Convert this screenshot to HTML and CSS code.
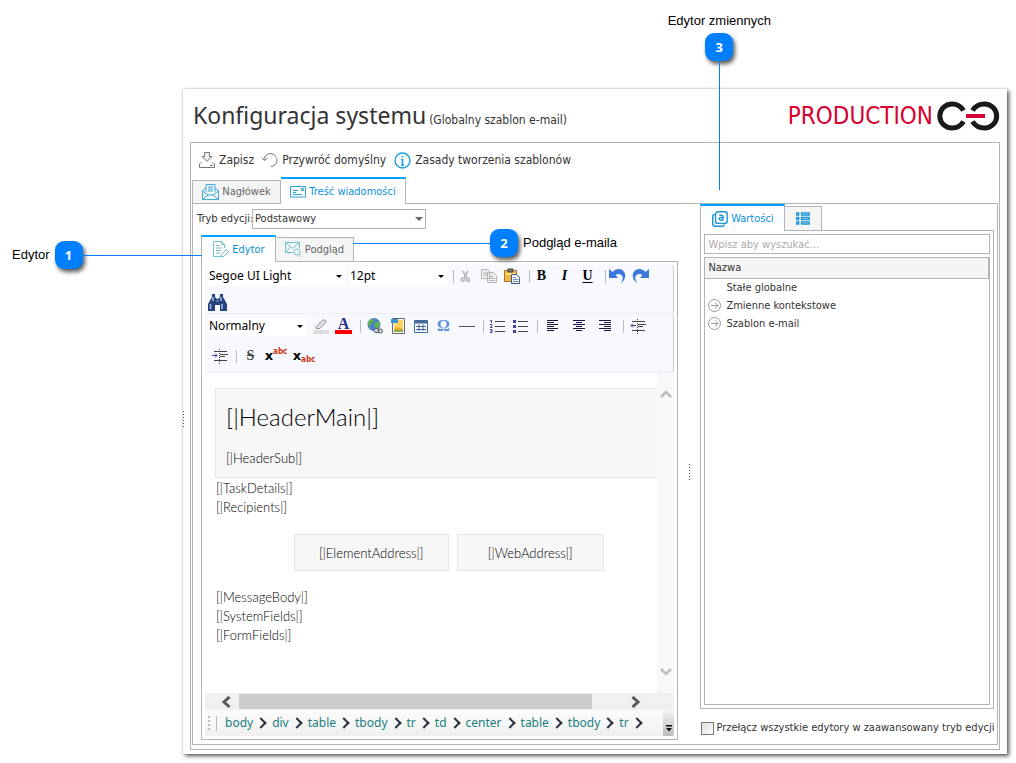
FILE: index.html
```html
<!DOCTYPE html>
<html lang="pl">
<head>
<meta charset="utf-8">
<title>Konfiguracja systemu</title>
<link rel="stylesheet" href="styles.css">
</head>
<body>
<div class="page">
  <main class="window">
    <header class="header">
      <h1 class="title">Konfiguracja systemu</h1>
      <span class="subtitle">(Globalny szablon e-mail)</span>
      <div class="brand">
        <span>PRODUCTION</span>
        <svg width="63" height="30" viewBox="0 0 63 30" fill="none" stroke="#1a1a1c" stroke-width="5">
          <path d="M26.500 9.500C24 5.500 20 3 15 3A12.200 12 0 0 0 15 27C20 27 24 24.500 26.500 20.500"/>
          <path d="M35.500 9.500C38 5.500 42 3 47.500 3A12.200 12 0 0 1 47.500 27C42 27 38 24.500 35.500 20.500"/>
          <path d="M29 15H48" stroke="#d8002f" stroke-width="4"/>
        </svg>
      </div>
    </header>

    <section class="frame">
      <div class="actions">
        <button class="action" type="button">
          <svg width="16" height="16" viewBox="0 0 16 16" fill="none" stroke="#777"><path d="M5.500.500h5v4H13L8 9.500 3 4.500h2.500z" fill="#eee"/><path d="M2.500 10.500H2L.500 12v3.500h15V12L14 10.500h-.500M11 13.500h3"/></svg>
          Zapisz
        </button>
        <button class="action" type="button">
          <svg width="16" height="16" viewBox="0 0 16 16" fill="none" stroke="#777"><path d="M2 8V7.500A6.500 6.500 0 1 1 8.500 14.500" stroke-dasharray="17 1"/><path d="M0 5.500 2.200 8.500 5.500 6"/></svg>
          Przywróć domyślny
        </button>
        <button class="action" type="button">
          <svg width="17" height="17" viewBox="0 0 17 17" fill="none" stroke="#1ba1e2" stroke-width="1.400"><circle cx="8.500" cy="8.500" r="7.500"/><path d="M8.500 7v6M8.500 4v1.600M7 7.500h1.500M7 13h3" stroke-width="1.600"/></svg>
          Zasady tworzenia szablonów
        </button>
      </div>

      <div class="tabs">
        <button class="tab tab-header" type="button">
          <svg width="17" height="16" viewBox="0 0 17 16" fill="none" stroke="#3aa9dd"><path d="M4 8V.500h9V8M6 3h5M6 5h5M6 7h5M3.500 4.500.500 6.500v9h16v-9l-3-2M.500 7 6 11h5l5.500-4M.500 15.500 6 11M16.500 15.500 11 11"/></svg>
          Nagłówek
        </button>
        <button class="tab tab-message active" type="button">
          <svg width="16" height="12" viewBox="0 0 16 12" fill="none" stroke="#2ba3dd"><path d="M.500.500h15v10.500H.500zM3 4.500h5M3 6.500h3M3 8.500h9M11.500 2.500h2v2h-2z"/></svg>
          Treść wiadomości
        </button>
        <span class="tab-fill"></span>
      </div>

      <div class="pane split">
        <div class="left">
          <div class="mode">
            <label for="mode">Tryb edycji:</label>
            <span class="drop drop-mode"><select id="mode"><option>Podstawowy</option></select></span>
          </div>
          <div class="editor-box">
            <div class="tabs">
              <button class="tab tab-editor active" type="button">
                <svg width="17" height="17" viewBox="0 0 17 17" fill="none" stroke="#6fc3ca"><path d="M10 15.500H1.500V.500h8l3 3V7M9.500.500v3h3M4 4.500h3M4 7h6M4 9.500h5M4 12h4M9.500 13.500l5-5 2 2-5 5-2.500.500z"/></svg>
                Edytor
              </button>
              <button class="tab tab-preview" type="button">
                <svg width="17" height="17" viewBox="0 0 17 17" fill="none" stroke="#6fc3ca"><path d="M8 11.500H.500V1.500h14V7M.500 1.500l7 6 7-6M.500 11.500 5 6.500"/><circle cx="12" cy="11" r="3"/><path d="m14 13 2.500 3"/></svg>
                Podgląd
              </button>
              <span class="tab-fill"></span>
            </div>
            <div class="pane editor">
              <div class="bar bar-first">
                <div class="bar-row">
                  <span class="drop drop-font"><select aria-label="Czcionka"><option>Segoe UI Light</option></select></span>
                  <span class="drop drop-size"><select aria-label="Rozmiar"><option>12pt</option></select></span>
                  <i class="sep"></i>
                  <button class="tool" type="button" aria-label="Wytnij"><svg width="11" height="15" viewBox="0 0 14 16" fill="none" stroke="#b5b5b5" stroke-width="2"><path d="M3.500 1 9 10M10 1 5 10"/><circle cx="3.500" cy="12" r="2"/><circle cx="10" cy="12" r="2"/></svg></button>
                  <button class="tool" type="button" aria-label="Kopiuj"><svg width="16" height="14" viewBox="0 0 16 14" fill="#eee" stroke="#b5b5b5"><path d="M.500.500h6l2 2v7h-8zM2 4h4M2 6h4M6.500 3.500h6l3 3v7h-9zM8 7.500h4M8 9.500h6M8 11.500h6"/></svg></button>
                  <button class="tool" type="button" aria-label="Wklej"><svg width="16" height="16" viewBox="0 0 16 16"><path d="M.500 2.500h12v11H.500z" fill="#efb943" stroke="#a7792c"/><path d="M4 1h5v3H4z" fill="#777" stroke="#444"/><path d="M2 5h9v2H2z" fill="#ffe17e"/><path d="M7.500 6.500h5l3 3v6h-8z" fill="#edf4ff" stroke="#405a88"/><path d="M9 9.500h3M9 11.500h5M9 13.500h5" stroke="#728cb5"/></svg></button>
                  <i class="sep"></i>
                  <button class="tool letter bold" type="button">B</button>
                  <button class="tool letter italic" type="button">I</button>
                  <button class="tool letter under" type="button">U</button>
                  <i class="sep"></i>
                  <button class="tool" type="button" aria-label="Cofnij"><svg width="17" height="16" viewBox="0 0 17 16"><path d="M0 1v9h9L6.500 7c3-2 6-1 7 1.500.700 2-.500 5-2 7 4-3 6-7 4-11C13 0 7 0 3.500 4z" fill="#3d78dc"/></svg></button>
                  <button class="tool" type="button" aria-label="Ponów"><svg width="17" height="16" viewBox="0 0 17 16"><path d="M17 1v9H8l2.500-3c-3-2-6-1-7 1.500-.700 2 .500 5 2 7-4-3-6-7-4-11C4 0 10 0 13.500 4z" fill="#3d78dc"/></svg></button>
                </div>
                <div class="bar-row">
                  <button class="tool find" type="button" aria-label="Znajdź"><svg width="19" height="17" viewBox="0 0 19 17"><path d="M4 0h3v3l2 2h1l2-2V0h3v3l4 7v7h-7v-6H7v6H0v-7l4-7z" fill="#27447f"/><path d="M2.500 10v5M14 10v5M5 3v4M13 3v4" stroke="#a4bfe6" stroke-width="1.500"/><path d="M8 7h3" stroke="#89a6d6"/></svg></button>
                </div>
              </div>
              <div class="bar bar-second">
                <div class="bar-row">
                  <span class="drop drop-style"><select aria-label="Styl"><option>Normalny</option></select></span>
                  <button class="tool" type="button" aria-label="Wyróżnienie"><svg width="16" height="16" viewBox="0 0 16 16"><path d="M3 9 10 1.500l3.500 2L7 10.500H3z" fill="#ddd" stroke="#999"/><path d="M0 12h16v4H0z" fill="#ddd"/></svg></button>
                  <button class="tool colour" type="button">A</button>
                  <i class="sep"></i>
                  <button class="tool" type="button" aria-label="Łącze"><svg width="16" height="16" viewBox="0 0 16 16"><circle cx="7" cy="6.500" r="6.500" fill="#4a83c7"/><path d="M3 2c3-2 5-1 4 1L4 5 3 9C0 7 0 4 3 2zM8 5l4-2 1 4-3 4-3-3z" fill="#62b34b"/><path d="M7 12.500a2 2 0 0 1 2-2h1a2 2 0 0 1 0 4H9a2 2 0 0 1-2-2zM11 13a2 2 0 0 1 2-2h.500a2 2 0 0 1 0 4H13a2 2 0 0 1-2-2z" fill="#ddd" stroke="#4c5566"/></svg></button>
                  <button class="tool" type="button" aria-label="Obraz"><svg width="14" height="16" viewBox="0 0 14 16"><path d="M1.500.500h12v15h-12z" fill="#fff" stroke="#666"/><path d="M3 2h9v12H3z" fill="#fbd45f"/><path d="M3 11l4-2 5 2v3H3z" fill="#eda63a"/><path d="M3 12h9v2H3z" fill="#86ac45"/><path d="M0 1h7v4H0z" fill="#3892d0"/></svg></button>
                  <button class="tool" type="button" aria-label="Tabela"><svg width="14" height="13" viewBox="0 0 14 13" fill="#fff" stroke="#466a9b"><path d="M.500.500h13v12H.500zM2 6.500h10M2 9.500h10M5 4v7M9 4v7"/><path d="M1 1h12v2.500H1z" fill="#466a9b" stroke="none"/></svg></button>
                  <button class="tool omega" type="button">Ω</button>
                  <button class="tool" type="button" aria-label="Linia"><svg width="16" height="1" viewBox="0 0 16 1"><path d="M0 .500h16" stroke="#555"/></svg></button>
                  <i class="sep"></i>
                  <button class="tool" type="button" aria-label="Lista numerowana"><svg width="15" height="14" viewBox="0 0 15 14" fill="none"><path d="M5 2.500h10M5 7.500h10M5 12.500h10" stroke="#444"/><path d="M0 1.500h1.500V4M0 5.500h2v1L0 8.500h2.500M0 10.500h2v3H0M.500 12H2" stroke="#43439c"/></svg></button>
                  <button class="tool" type="button" aria-label="Lista punktowana"><svg width="15" height="14" viewBox="0 0 15 14"><path d="M5 2.500h10M5 7.500h10M5 12.500h10" stroke="#444"/><path d="M0 1h3v3H0zM0 6h3v3H0zM0 11h3v3H0z" fill="#43439c"/></svg></button>
                  <i class="sep"></i>
                  <button class="tool wide" type="button" aria-label="Do lewej"><svg width="12" height="12" viewBox="0 0 12 12" stroke="#181842"><path d="M0 .500h11M0 2.500h7M0 4.500h11M0 6.500h7M0 8.500h11M0 10.500h7"/></svg></button>
                  <button class="tool wide" type="button" aria-label="Do środka"><svg width="12" height="12" viewBox="0 0 12 12" stroke="#181842"><path d="M0 .500h12M3 2.500h6M0 4.500h12M3 6.500h6M0 8.500h12M3 10.500h6"/></svg></button>
                  <button class="tool wide" type="button" aria-label="Do prawej"><svg width="12" height="12" viewBox="0 0 12 12" stroke="#181842"><path d="M0 .500h12M5 2.500h7M0 4.500h12M5 6.500h7M0 8.500h12M5 10.500h7"/></svg></button>
                  <i class="sep"></i>
                  <button class="tool" type="button" aria-label="Zmniejsz wcięcie"><svg width="16" height="15" viewBox="0 0 16 15" fill="none" stroke="#444"><path d="M2 2.500h13M8 5.500h8M8 7.500h5M2 11.500h13"/><path d="M7.500 0v15" stroke-dasharray="1 1"/><path d="M6 6.500H1M3 4.500l-2 2 2 2" stroke="#43439c"/></svg></button>
                </div>
                <div class="bar-row">
                  <button class="tool" type="button" aria-label="Zwiększ wcięcie"><svg width="16" height="15" viewBox="0 0 16 15" fill="none" stroke="#444"><path d="M2 2.500h13M8 5.500h8M8 7.500h5M2 11.500h13"/><path d="M7.500 0v15" stroke-dasharray="1 1"/><path d="M0 6.500h5M3 4.500l2 2-2 2" stroke="#43439c"/></svg></button>
                  <i class="sep"></i>
                  <button class="tool strike" type="button">S</button>
                  <button class="tool script" type="button"><b>x</b><sup>abc</sup></button>
                  <button class="tool script" type="button"><b>x</b><sub>abc</sub></button>
                </div>
              </div>

              <div class="canvas">
                <div class="document">
                  <div class="mail-head">
                    <p class="mail-title">[|HeaderMain|]</p>
                    <p>[|HeaderSub|]</p>
                  </div>
                  <p>[|TaskDetails|]</p>
                  <p>[|Recipients|]</p>
                  <div class="mail-links">
                    <span class="mail-link link-element">[|ElementAddress|]</span>
                    <span class="mail-link link-web">[|WebAddress|]</span>
                  </div>
                  <p>[|MessageBody|]</p>
                  <p>[|SystemFields|]</p>
                  <p>[|FormFields|]</p>
                </div>
                <div class="vscroll">
                  <svg width="12" height="8" viewBox="0 0 12 8" fill="none" stroke="#bbb" stroke-width="2.500"><path d="m1 7 5-5 5 5"/></svg>
                  <svg width="12" height="8" viewBox="0 0 12 8" fill="none" stroke="#bbb" stroke-width="2.500"><path d="m1 1 5 5 5-5"/></svg>
                </div>
              </div>
              <div class="hscroll">
                <svg width="10" height="12" viewBox="0 0 10 12" fill="none" stroke="#5a5a5a" stroke-width="3"><path d="M8.500 1 3 6l5.500 5"/></svg>
                <span class="track"><span class="thumb"></span></span>
                <svg width="10" height="12" viewBox="0 0 10 12" fill="none" stroke="#5a5a5a" stroke-width="3"><path d="M1.500 1 7 6l-5.500 5"/></svg>
              </div>
              <nav class="crumbs">
                <i class="grip"></i><i class="crumb-sep"></i>
                <button class="crumb" type="button">body</button>
                <button class="crumb" type="button">div</button>
                <button class="crumb" type="button">table</button>
                <button class="crumb" type="button">tbody</button>
                <button class="crumb" type="button">tr</button>
                <button class="crumb" type="button">td</button>
                <button class="crumb" type="button">center</button>
                <button class="crumb" type="button">table</button>
                <button class="crumb" type="button">tbody</button>
                <button class="crumb" type="button">tr</button>
                <button class="more" type="button" aria-label="Więcej"><svg width="6" height="7" viewBox="0 0 6 7"><path d="M0 0h6v1.500H0zM0 3h6L3 6.500z" fill="#111"/></svg></button>
              </nav>
            </div>
          </div>
        </div>

        <div class="splitter"><i class="dots"></i></div>

        <aside class="right">
          <div class="tabs">
            <button class="tab tab-values active" type="button">
              <svg width="16" height="16" viewBox="0 0 16 16" fill="none" stroke="#1a96d8" stroke-width="1.400"><rect x="3.500" y=".700" width="11.700" height="11.700" rx="2.500"/><path d="M3 3.500c-1.500 0-2.300.800-2.300 2v7q0 2.800 2.800 2.800h6.700q2 0 2.300-2"/><path d="M7.300 4.300h2.200q1.500 0 1.500 1.500V9.300M11 6.500H9q-1.800 0-1.800 1.300T9 9h2" stroke-width="1.500"/></svg>
              Wartości
            </button>
            <button class="tab tab-list" type="button" aria-label="Lista">
              <svg width="14" height="13" viewBox="0 0 14 13" fill="none" stroke="#1a96d8" stroke-width="1.300"><path d="M.700 1h2v2h-2zM5.500 1h7.700v2H5.500zM.700 5.500h2v2h-2zM5.500 5.500h7.700v2H5.500zM.700 10h2v2h-2zM5.500 10h7.700v2H5.500z"/></svg>
            </button>
            <span class="tab-fill"></span>
          </div>
          <div class="pane values">
            <input class="search" type="text" placeholder="Wpisz aby wyszukać..." aria-label="Szukaj">
            <div class="list">
              <table class="tree">
                <thead><tr><th>Nazwa</th></tr></thead>
                <tbody>
                  <tr><td><span class="node"><i class="arrow"></i>Stałe globalne</span></td></tr>
                  <tr><td><span class="node"><svg class="arrow" viewBox="0 0 13 13" fill="none" stroke="#999"><circle cx="6.500" cy="6.500" r="6"/><path d="M3 6.500h7M7 3.500l3 3-3 3"/></svg>Zmienne kontekstowe</span></td></tr>
                  <tr><td><span class="node"><svg class="arrow" viewBox="0 0 13 13" fill="none" stroke="#999"><circle cx="6.500" cy="6.500" r="6"/><path d="M3 6.500h7M7 3.500l3 3-3 3"/></svg>Szablon e-mail</span></td></tr>
                </tbody>
              </table>
            </div>
          </div>
          <label class="check"><input type="checkbox">Przełącz wszystkie edytory w zaawansowany tryb edycji</label>
        </aside>
      </div>
    </section>
    <i class="dots edge-dots"></i>
  </main>

  <div class="callout callout-editor"><span>Edytor</span><b class="badge">1</b><i class="line"></i></div>
  <div class="callout callout-preview"><i class="line"></i><b class="badge">2</b><span>Podgląd e-maila</span></div>
  <div class="callout callout-vars"><span>Edytor zmiennych</span><b class="badge">3</b><i class="line"></i></div>
</div>
</body>
</html>
```
FILE: styles.css
```css
* { box-sizing: border-box; }

body {
  margin: 0;
  background: #fff;
  color: #333;
  font: 11px/18px "DejaVu Sans Condensed", "DejaVu Sans", sans-serif;
}

button, input, select { font: inherit; color: inherit; }
button { background: none; border: 0; padding: 0; }
p { margin: 0; }
svg { flex: none; display: block; }

.page {
  position: relative;
  display: flex;
  min-height: 100vh;
  padding: 89px 9px 9px 183px;
}

.window {
  position: relative;
  flex: 1;
  min-width: 0;
  display: flex;
  flex-direction: column;
  padding: 0 7px 4px;
  background: #fff;
  box-shadow: 2px 2px 4px #555, 0 0 2px #ccc;
}

/* Header */
.header {
  display: flex;
  align-items: baseline;
  height: 53px;
  padding: 8px 0 0 3px;
}
.title { margin: 0; font: 23px/36px "Noto Sans", sans-serif; }
.subtitle { margin-left: 3px; font-size: 12px; }
.brand {
  display: flex;
  align-items: center;
  gap: 4px;
  margin-left: auto;
  color: #d8002f;
  font-size: 24px;
  line-height: 36px;
}

.frame {
  flex: 1;
  display: flex;
  flex-direction: column;
  border: 1px solid #b4b4b4;
  padding: 0 1px 4px;
}

.actions {
  display: flex;
  align-items: center;
  gap: 8px;
  height: 34px;
  padding-left: 7px;
}
.action { display: flex; align-items: center; gap: 4px; font-size: 12px; }

/* Tabs */
.tabs { display: flex; align-items: flex-end; height: 27px; }
.tab {
  display: flex;
  align-items: center;
  justify-content: center;
  gap: 3px;
  height: 24px;
  border: 1px solid #b4b4b4;
  background: #f5f5f5;
  color: #666;
}
.tab.active {
  height: 27px;
  border-top: 2px solid #00a2ff;
  border-bottom: 0;
  background: #fff;
  color: #0a90dd;
}
.tab:not(.active) + .active { border-left: 0; }
.active + .tab { border-left: 0; height: 25px; }
.tab-fill { flex: 1; border-bottom: 1px solid #b4b4b4; }
.tab-header { width: 89px; }
.tab-message { width: 125px; }
.tab-editor { width: 75px; }
.tab-preview { width: 78px; }
.tab-values { width: 85px; }
.tab-list { width: 37px; }

.pane { flex: 1; border: 1px solid #b4b4b4; border-top: 0; }

.split {
  display: grid;
  grid-template-columns: minmax(0, 482fr) 22px minmax(0, 294fr);
  padding: 0 3px 4px 4px;
}

.left, .editor-box, .right { display: flex; flex-direction: column; }
.mode { display: flex; height: 31px; padding-top: 5px; line-height: 20px; }
.mode label { width: 55px; white-space: nowrap; }
.editor-box { flex: 1; margin-left: 4px; }

/* Drop-downs */
.drop { position: relative; display: block; }
.drop select {
  appearance: none;
  width: 100%;
  height: 20px;
  padding: 0 16px 0 1px;
  border: 0;
  border-radius: 0;
  background: #fff;
  line-height: 20px;
}
.drop::after {
  content: "";
  position: absolute;
  right: 3px;
  top: 9px;
  border: 3px solid transparent;
  border-top-color: #000;
  border-bottom: 0;
}
.drop-mode { width: 174px; }
.drop-mode select { padding-left: 2px; border: 1px solid #b4b4b4; line-height: 18px; }
.drop-mode::after { top: 8px; border-width: 4px 4px 0; border-top-color: #666; }
.drop-font { width: 137px; }
.drop-size { width: 98px; margin-left: 4px; }
.drop-style { width: 98px; margin-right: 3px; }

/* Formatting bars */
.editor { display: flex; flex-direction: column; padding: 3px; }
.bar {
  display: grid;
  align-content: start;
  border-right: 1px solid #ccc;
  border-bottom: 1px solid #eee;
  border-radius: 3px;
  background: #f8f8ff;
  padding-left: 3px;
  color: #000;
  font: 12px/20px "Noto Sans", sans-serif;
}
.bar-first { height: 49px; gap: 4px; }
.bar-second { height: 59px; gap: 8px; padding-top: 1px; }
.bar-row { display: flex; align-items: center; height: 22px; }
.sep { width: 1px; height: 13px; margin-left: 6px; background: #bbb; }
.bar-second .sep { margin: 0 2px 0 5px; }
.tool {
  display: flex;
  align-items: center;
  justify-content: center;
  width: 23px;
  height: 22px;
}
.wide { width: 26px; }
.find { width: 19px; }
.letter { font: bold 14px/22px "Liberation Serif", serif; }
.italic { font-style: italic; }
.under { text-decoration: underline; text-underline-offset: 2px; }
.colour {
  height: 16px;
  border: solid #f00;
  border-width: 0 0 4px;
  margin: 0 3px;
  width: 17px;
  color: #1c2c83;
  font: bold 16px/12px "Liberation Serif", serif;
}
.omega { color: #5b92dc; font: bold 16px/22px "Liberation Serif", serif; }
.strike { color: #444; font: bold 14px/22px "Liberation Serif", serif; text-decoration: line-through; }
.script { width: 28px; font: bold 13px/16px "DejaVu Sans", sans-serif; }
.script sup, .script sub { color: #c8320f; font: bold 8px/8px "DejaVu Sans Condensed", sans-serif; }
.script sup { align-self: flex-start; margin-top: 3px; }
.script sub { align-self: flex-end; margin-bottom: 3px; }

/* Message document */
.canvas { flex: 1; display: flex; }
.document {
  flex: 1;
  padding: 15px 0 0 10px;
  color: #000;
  font: 300 13px/19px Lato, "Open Sans", sans-serif;
}
.document > p { padding-left: 1px; }
.mail-head {
  height: 90px;
  margin-bottom: 1px;
  padding: 8px 10px;
  border: 1px solid #e6e6e6;
  border-right: 0;
  background: #f7f7f7;
}
.mail-title { margin-bottom: 12px; font-size: 24px; line-height: 40px; }
.mail-links {
  display: flex;
  justify-content: center;
  gap: 8px;
  padding: 17px 53px 17px 78px;
}
.mail-link {
  height: 37px;
  border: 1px solid #e6e6e6;
  background: #f7f7f7;
  line-height: 37px;
  text-align: center;
}
.link-element { width: 155px; }
.link-web { width: 147px; }
.vscroll {
  display: flex;
  flex-direction: column;
  align-items: center;
  justify-content: space-between;
  width: 17px;
  padding: 17px 0;
  background: #f8f8f8;
}
.hscroll {
  display: flex;
  align-items: center;
  height: 17px;
  padding: 0 33px 0 16px;
  background: #f0f0f0;
}
.track { flex: 1; margin: 0 4px 0 8px; }
.thumb { display: block; width: 91%; height: 15px; background: #cdcdcd; }

.crumbs {
  display: flex;
  align-items: center;
  height: 26px;
  padding-left: 3px;
  background: linear-gradient(#fcfcfc, #f0f0f0);
  color: #1a8080;
  font: 12px/20px "Noto Sans", sans-serif;
}
.grip { width: 2px; height: 14px; background: repeating-linear-gradient(#bbb 0 2px, transparent 2px 4px); }
.crumb-sep { width: 1px; height: 15px; margin: 0 8px 0 6px; background: #bbb; }
.crumb { display: flex; align-items: center; height: 20px; margin-right: 7px; }
.crumb::after {
  content: "";
  width: 6px;
  height: 6px;
  margin-left: 4px;
  border: solid #2b3440;
  border-width: 2px 2px 0 0;
  transform: rotate(45deg);
}
.more {
  align-self: stretch;
  display: flex;
  align-items: flex-end;
  justify-content: center;
  width: 11px;
  margin-left: auto;
  padding-bottom: 4px;
  border-radius: 0 3px 3px 0;
  background: linear-gradient(#f4f4f4, #bbb);
}

/* Splitters */
.splitter { display: flex; align-items: center; justify-content: center; }
.dots { width: 1px; height: 16px; background: repeating-linear-gradient(#555 0 1px, transparent 1px 3px); }
.edge-dots { position: absolute; left: 0; top: 322px; }

/* Variables */
.values { display: flex; flex-direction: column; gap: 3px; padding: 3px; }
.search { width: 100%; height: 20px; padding: 0 3px; border: 1px solid #b4b4b4; }
.search::placeholder { color: #aaa; opacity: 1; }
.list { flex: 1; border: 1px solid #b4b4b4; }
.tree { width: 100%; border-collapse: collapse; }
.tree th {
  height: 20px;
  padding: 0 3px;
  border-right: 1px solid #b4b4b4;
  border-bottom: 1px solid #b4b4b4;
  background: #f5f5f5;
  font-weight: 400;
  text-align: left;
}
.tree td { height: 18px; padding: 0 3px; }
.node { display: flex; align-items: center; gap: 5px; }
.arrow { width: 13px; height: 13px; }

.check { display: flex; align-items: center; gap: 2px; height: 30px; margin-top: 1px; padding-top: 6px; white-space: nowrap; }
.check input {
  appearance: none;
  flex: none;
  width: 13px;
  height: 13px;
  margin: 0 0 0 1px;
  border: 1px solid #777;
  background: linear-gradient(135deg, #ddd, #fff);
}

/* Callouts */
.callout {
  position: absolute;
  display: flex;
  align-items: center;
  color: #000;
  font: 13px/20px "Liberation Sans", Arial, sans-serif;
  white-space: nowrap;
}
.badge {
  width: 28px;
  height: 28px;
  border-radius: 9px;
  background: #007fff;
  box-shadow: 2px 3px 4px rgba(0, 0, 0, .65);
  color: #fff;
  font: bold 13px/28px "Open Sans", sans-serif;
  text-align: center;
}
.line { background: #007fff; }
.callout-editor { left: 12px; top: 241px; gap: 5px; }
.callout-editor .line { width: 119px; height: 1px; margin-left: -5px; }
.callout-preview { left: 353px; top: 229px; }
.callout-preview .line { width: 137px; height: 1px; }
.callout-preview span { margin-left: 5px; }
.callout-vars { right: 245px; top: 11px; flex-direction: column; }
.callout-vars .badge { margin-top: 2px; }
.callout-vars .line { width: 1px; height: 129px; }
```
